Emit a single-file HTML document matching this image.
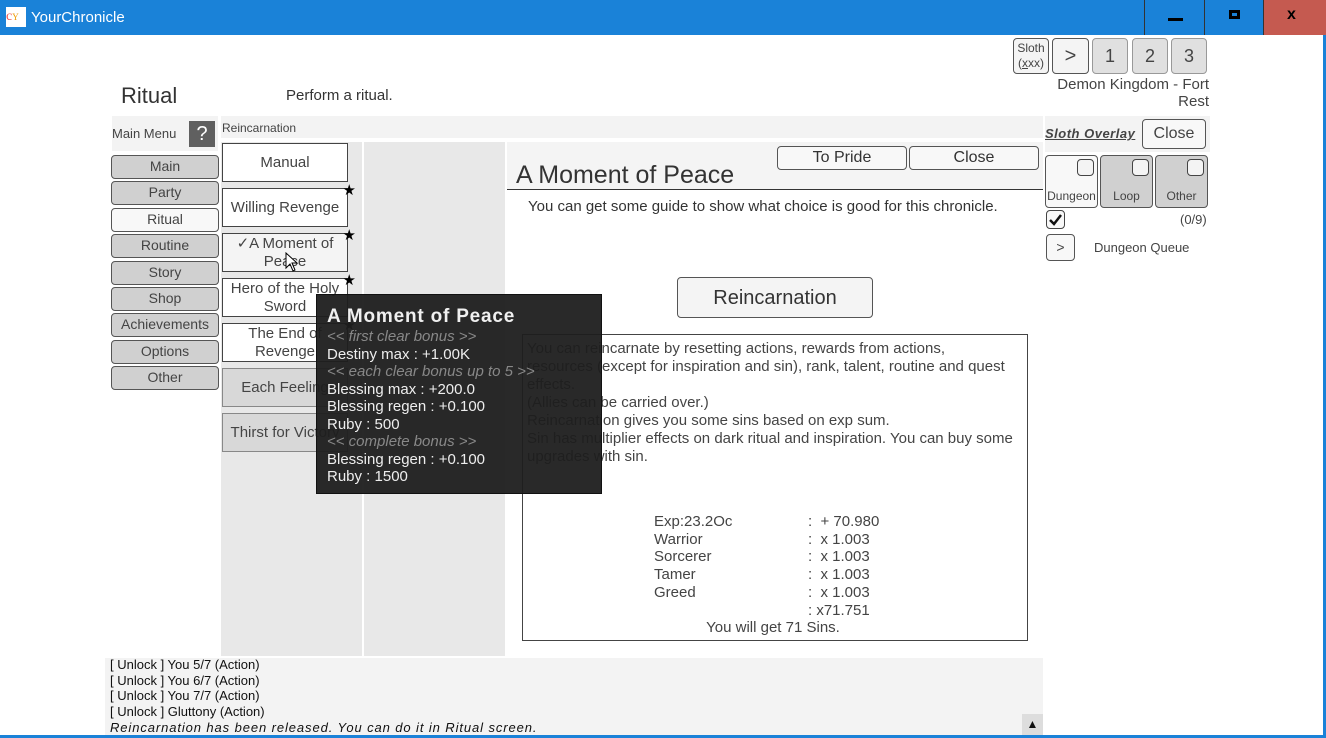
<!DOCTYPE html>
<html><head><meta charset="utf-8"><style>
*{box-sizing:border-box;margin:0;padding:0}
body{width:1326px;height:738px;position:relative;overflow:hidden;background:#fff;font-family:"Liberation Sans",sans-serif;color:#333}
.a{position:absolute}
.btn{position:absolute;border:1px solid #555;border-radius:4px;background:#d0d0d0;text-align:center;font-size:14px;color:#444;line-height:20px}
.lb{position:absolute;border:1px solid #444;background:#fff;text-align:center;font-size:15px;color:#444;line-height:18px;display:flex;align-items:center;justify-content:center}
.star{position:absolute;right:-9px;top:-7px;font-size:15px;color:#000}
</style></head><body>
<div class="a" style="left:0;top:0;width:1326px;height:35px;background:#1a82d8"></div>
<div class="a" style="left:6px;top:7px;width:20px;height:20px;background:#fff;color:#e55;font-size:14px;line-height:20px;font-family:'Liberation Serif',serif">c<span style="font-size:9px;color:#e90">Y</span></div>
<div class="a" style="left:31px;top:9px;color:#fff;font-size:15px">YourChronicle</div>
<div class="a" style="left:1144px;top:0;width:61px;height:35px;border-left:1px solid #333;border-right:1px solid #333"></div>
<div class="a" style="left:1168px;top:18px;width:15px;height:3px;background:#000"></div>
<div class="a" style="left:1229px;top:10px;width:11px;height:9px;border:3px solid #000"></div>
<div class="a" style="left:1263px;top:0;width:63px;height:35px;background:#c55a50;border-left:1px solid #333"></div>
<div class="a" style="left:1287px;top:6px;font-size:16px;font-weight:bold;color:#000">x</div>
<div class="a" style="left:0;top:735px;width:1326px;height:3px;background:#1a82d8"></div>
<div class="a" style="left:1323px;top:35px;width:3px;height:703px;background:#1a82d8"></div>

<div class="btn" style="left:1013px;top:38px;width:36px;height:36px;background:#f4f4f4;font-size:12px;line-height:15px;padding-top:2px">Sloth<br>(<u>x</u>xx)</div>
<div class="btn" style="left:1052px;top:38px;width:37px;height:36px;background:#f4f4f4;font-size:20px;line-height:34px">&gt;</div>
<div class="btn" style="left:1092px;top:38px;width:36px;height:36px;background:#e0e0e0;border-color:#999;font-size:18px;line-height:34px">1</div>
<div class="btn" style="left:1132px;top:38px;width:36px;height:36px;background:#e0e0e0;border-color:#999;font-size:18px;line-height:34px">2</div>
<div class="btn" style="left:1171px;top:38px;width:36px;height:36px;background:#e0e0e0;border-color:#999;font-size:18px;line-height:34px">3</div>
<div class="a" style="left:1040px;top:76px;width:169px;text-align:right;font-size:15px;line-height:17px;color:#444">Demon Kingdom - Fort<br>Rest</div>

<div class="a" style="left:121px;top:83px;font-size:22px;color:#333">Ritual</div>
<div class="a" style="left:286px;top:87px;font-size:15px;color:#333">Perform a ritual.</div>

<div class="a" style="left:112px;top:116px;width:106px;height:35px;background:#f3f3f3"></div>
<div class="a" style="left:112px;top:126px;font-size:13px;color:#444">Main Menu</div>
<div class="a" style="left:189px;top:121px;width:26px;height:26px;background:#606060;color:#fff;text-align:center;font-size:20px;line-height:26px">?</div>
<div class="btn" style="left:111px;top:155px;width:108px;height:24px">Main</div>
<div class="btn" style="left:111px;top:181px;width:108px;height:24px">Party</div>
<div class="btn" style="left:111px;top:208px;width:108px;height:24px;background:#f8f8f8">Ritual</div>
<div class="btn" style="left:111px;top:234px;width:108px;height:24px">Routine</div>
<div class="btn" style="left:111px;top:261px;width:108px;height:24px">Story</div>
<div class="btn" style="left:111px;top:287px;width:108px;height:24px">Shop</div>
<div class="btn" style="left:111px;top:313px;width:108px;height:24px">Achievements</div>
<div class="btn" style="left:111px;top:340px;width:108px;height:24px">Options</div>
<div class="btn" style="left:111px;top:366px;width:108px;height:24px">Other</div>

<div class="a" style="left:221px;top:116px;width:822px;height:22px;background:#f3f3f3"></div>
<div class="a" style="left:222px;top:121px;font-size:12px;color:#444">Reincarnation</div>
<div class="a" style="left:221px;top:142px;width:141px;height:514px;background:#e8e8e8"></div>
<div class="a" style="left:364px;top:142px;width:141px;height:514px;background:#e8e8e8"></div>

<div class="lb" style="left:222px;top:143px;width:126px;height:39px">Manual</div>
<div class="lb" style="left:222px;top:188px;width:126px;height:39px">Willing Revenge<span class="star">★</span></div>
<div class="lb" style="left:222px;top:233px;width:126px;height:39px;background:#f4f4f4">✓A Moment of<br>Peace<span class="star">★</span></div>
<div class="lb" style="left:222px;top:278px;width:126px;height:39px">Hero of the Holy<br>Sword<span class="star">★</span></div>
<div class="lb" style="left:222px;top:323px;width:126px;height:39px">The End of<br>Revenge<span class="star">★</span></div>
<div class="lb" style="left:222px;top:368px;width:126px;height:39px;background:#d8d8d8;border-color:#888">Each Feeling</div>
<div class="lb" style="left:222px;top:413px;width:126px;height:39px;background:#d8d8d8;border-color:#888">Thirst for Victory</div>

<div class="a" style="left:507px;top:142px;width:536px;height:48px;background:#f4f4f4;border-bottom:1px solid #333"></div>
<div class="a" style="left:516px;top:161px;font-size:25px;color:#333">A Moment of Peace</div>
<div class="btn" style="left:777px;top:146px;width:130px;height:24px;background:#f8f8f8;font-size:16px;line-height:22px;color:#333">To Pride</div>
<div class="btn" style="left:909px;top:146px;width:130px;height:24px;background:#f8f8f8;font-size:16px;line-height:22px;color:#333">Close</div>
<div class="a" style="left:528px;top:198px;font-size:15px;color:#333">You can get some guide to show what choice is good for this chronicle.</div>
<div class="btn" style="left:677px;top:277px;width:196px;height:41px;background:#f4f4f4;font-size:20px;line-height:40px;color:#333">Reincarnation</div>
<div class="a" style="left:522px;top:334px;width:506px;height:307px;border:1px solid #444"></div>
<div class="a" style="left:527px;top:340px;width:498px;font-size:15px;line-height:18px;color:#444">You can reincarnate by resetting actions, rewards from actions,<br>resources (except for inspiration and sin), rank, talent, routine and quest effects.<br>(Allies can be carried over.)<br>Reincarnation gives you some sins based on exp sum.<br>Sin has multiplier effects on dark ritual and inspiration. You can buy some upgrades with sin.</div>
<div class="a" style="left:654px;top:513px;font-size:15px;line-height:17.7px;color:#444">Exp:23.2Oc<br>Warrior<br>Sorcerer<br>Tamer<br>Greed</div>
<div class="a" style="left:808px;top:513px;font-size:15px;line-height:17.7px;color:#444">:&nbsp; + 70.980<br>:&nbsp; x 1.003<br>:&nbsp; x 1.003<br>:&nbsp; x 1.003<br>:&nbsp; x 1.003<br>: x71.751</div>
<div class="a" style="left:520px;top:619px;width:506px;text-align:center;font-size:15px;color:#444">You will get 71 Sins.</div>

<div class="a" style="left:1045px;top:116px;width:165px;height:36px;background:#f3f3f3"></div>
<div class="a" style="left:1045px;top:126px;font-size:13px;font-weight:bold;font-style:italic;text-decoration:underline;color:#444;letter-spacing:.5px">Sloth Overlay</div>
<div class="btn" style="left:1142px;top:119px;width:64px;height:30px;background:#f8f8f8;font-size:16px;line-height:28px">Close</div>
<div class="btn" style="left:1045px;top:155px;width:53px;height:53px;background:#f8f8f8;font-size:12px;line-height:14px;padding-top:33px">Dungeon</div>
<div class="btn" style="left:1100px;top:155px;width:53px;height:53px;background:#d0d0d0;font-size:12px;line-height:14px;padding-top:33px">Loop</div>
<div class="btn" style="left:1155px;top:155px;width:53px;height:53px;background:#d0d0d0;font-size:12px;line-height:14px;padding-top:33px">Other</div>
<div class="a" style="left:1077px;top:159px;width:17px;height:17px;border:1px solid #444;border-radius:4px;background:#f4f4f4"></div>
<div class="a" style="left:1132px;top:159px;width:17px;height:17px;border:1px solid #444;border-radius:4px;background:#f4f4f4"></div>
<div class="a" style="left:1187px;top:159px;width:17px;height:17px;border:1px solid #444;border-radius:4px;background:#f4f4f4"></div>
<div class="a" style="left:1046px;top:210px;width:19px;height:19px;border:1px solid #444;border-radius:4px;background:#f8f8f8"><svg width="17" height="17"><path d="M3 9 L7 13 L14 4" stroke="#111" stroke-width="2.5" fill="none"/></svg></div>
<div class="a" style="left:1180px;top:212px;font-size:13px;color:#444">(0/9)</div>
<div class="btn" style="left:1046px;top:234px;width:29px;height:27px;background:#f8f8f8;line-height:25px">&gt;</div>
<div class="a" style="left:1094px;top:240px;font-size:13px;color:#444">Dungeon Queue</div>

<div class="a" style="left:105px;top:658px;width:938px;height:77px;background:#f3f3f3"></div>
<div class="a" style="left:110px;top:657px;font-size:13px;line-height:15.7px;color:#111">[ Unlock ] You 5/7 (Action)<br>[ Unlock ] You 6/7 (Action)<br>[ Unlock ] You 7/7 (Action)<br>[ Unlock ] Gluttony (Action)<br><i style="letter-spacing:.9px">Reincarnation has been released. You can do it in Ritual screen.</i></div>
<div class="a" style="left:1022px;top:714px;width:21px;height:21px;background:#ddd;text-align:center;font-size:12px;line-height:21px;color:#111">▲</div>

<div class="a" style="left:316px;top:294px;width:286px;height:200px;background:rgba(30,30,30,0.95);border:1px solid #111"></div>
<div class="a" style="left:327px;top:306px;font-size:19px;font-weight:bold;color:#f0f0f0;letter-spacing:.8px">A Moment of Peace</div>
<div class="a" style="left:327px;top:328px;font-size:15px;line-height:17.5px;color:#eee">
<i style="color:#888">&lt;&lt; first clear bonus &gt;&gt;</i><br>Destiny max : +1.00K<br><i style="color:#888">&lt;&lt; each clear bonus up to 5 &gt;&gt;</i><br>Blessing max : +200.0<br>Blessing regen : +0.100<br>Ruby : 500<br><i style="color:#888">&lt;&lt; complete bonus &gt;&gt;</i><br>Blessing regen : +0.100<br>Ruby : 1500</div>
<svg class="a" style="left:285px;top:252px" width="14" height="20"><path d="M1 1 L1 16 L5 12 L8 19 L10 18 L7 11 L12 11 Z" fill="#fff" stroke="#000" stroke-width="1"/></svg>
</body></html>
